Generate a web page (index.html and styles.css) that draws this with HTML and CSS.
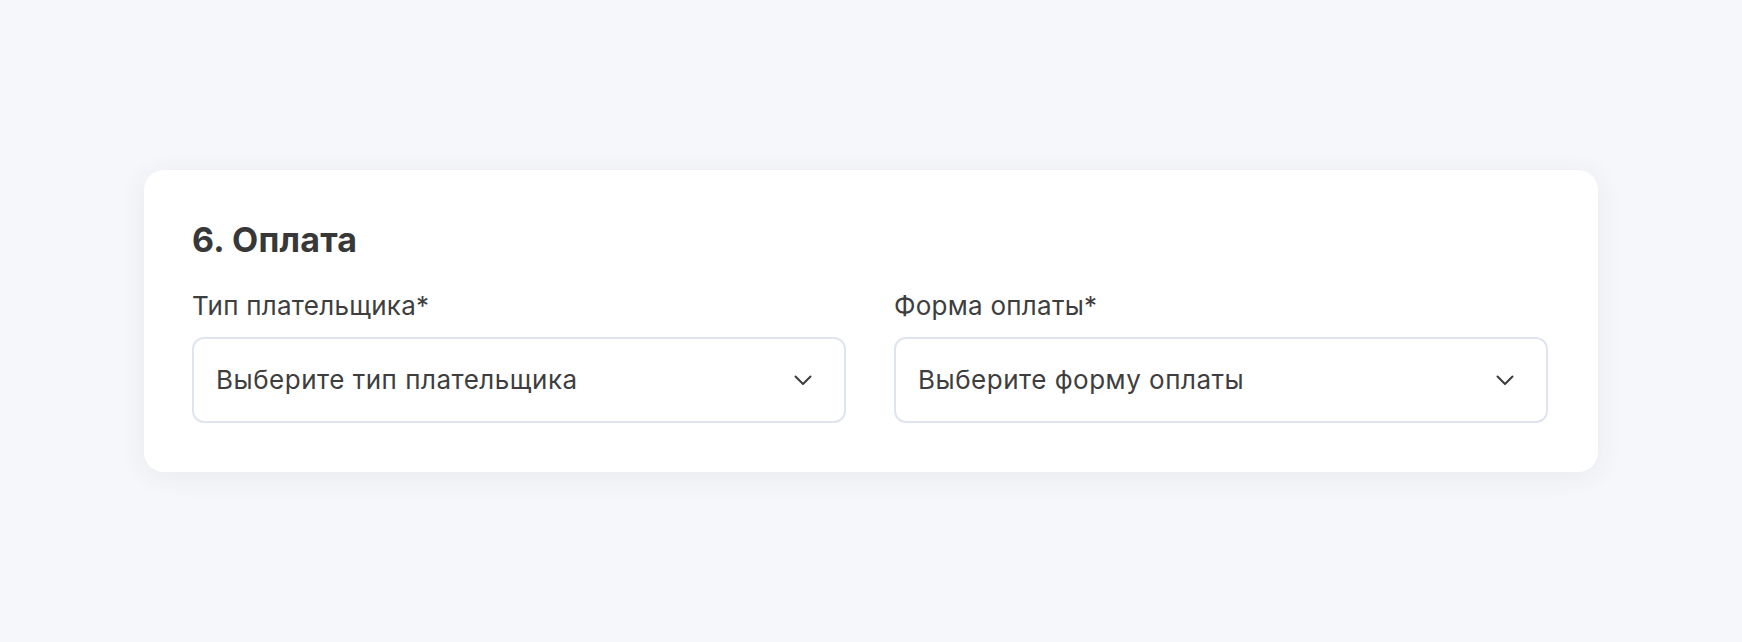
FILE: index.html
```html
<!DOCTYPE html>
<html lang="ru">
<head>
<meta charset="utf-8">
<title>Оплата</title>
<link rel="stylesheet" href="styles.css">
</head>
<body>
<main class="page">
  <section class="card">
    <h2 class="card-title">6. Оплата</h2>
    <div class="fields">
      <div class="field">
        <div class="field-label">Тип плательщика*</div>
        <div class="select">
          <span class="select-text">Выберите тип плательщика</span>
          <svg class="chevron" width="18" height="11" viewBox="0 0 18 11"><path d="M1.5 1.5 L9 9 L16.5 1.5" fill="none" stroke="#3c3c3c" stroke-width="2" stroke-linecap="round" stroke-linejoin="round"/></svg>
        </div>
      </div>
      <div class="field">
        <div class="field-label">Форма оплаты*</div>
        <div class="select">
          <span class="select-text">Выберите форму оплаты</span>
          <svg class="chevron" width="18" height="11" viewBox="0 0 18 11"><path d="M1.5 1.5 L9 9 L16.5 1.5" fill="none" stroke="#3c3c3c" stroke-width="2" stroke-linecap="round" stroke-linejoin="round"/></svg>
        </div>
      </div>
    </div>
  </section>
</main>
</body>
</html>
```
FILE: styles.css
```css
* { box-sizing: border-box; }
html, body { margin: 0; padding: 0; }
body {
  background: #f6f7fa;
  font-family: Inter, "Noto Sans", sans-serif;
  color: #3c3c3c;
}
.page {
  width: 1742px;
  height: 642px;
  display: flex;
  align-items: center;
  justify-content: center;
}
.card {
  width: 1454px;
  height: 302px;
  background: #ffffff;
  border-radius: 20px;
  box-shadow: 0 4px 28px rgba(40, 50, 90, 0.07);
  padding: 50px 50px 49px 48px;
}
.card-title {
  margin: 0;
  font-size: 34px;
  line-height: 40px;
  font-weight: 700;
  color: #383838;
  letter-spacing: 0.2px;
}
.fields {
  margin-top: 30px;
  display: grid;
  grid-template-columns: 1fr 1fr;
  column-gap: 48px;
}
.field-label {
  font-size: 26px;
  line-height: 32px;
  margin-bottom: 15px;
  color: #3e3e3e;
  letter-spacing: 0.25px;
}
.select {
  height: 86px;
  border: 2px solid #dfe4ee;
  border-radius: 12px;
  display: flex;
  align-items: center;
  justify-content: space-between;
  padding: 0 32px 0 22px;
}
.select-text {
  font-size: 26px;
  line-height: 32px;
  color: #3e3e3e;
  letter-spacing: 0.5px;
}
.chevron { display: block; }
```
